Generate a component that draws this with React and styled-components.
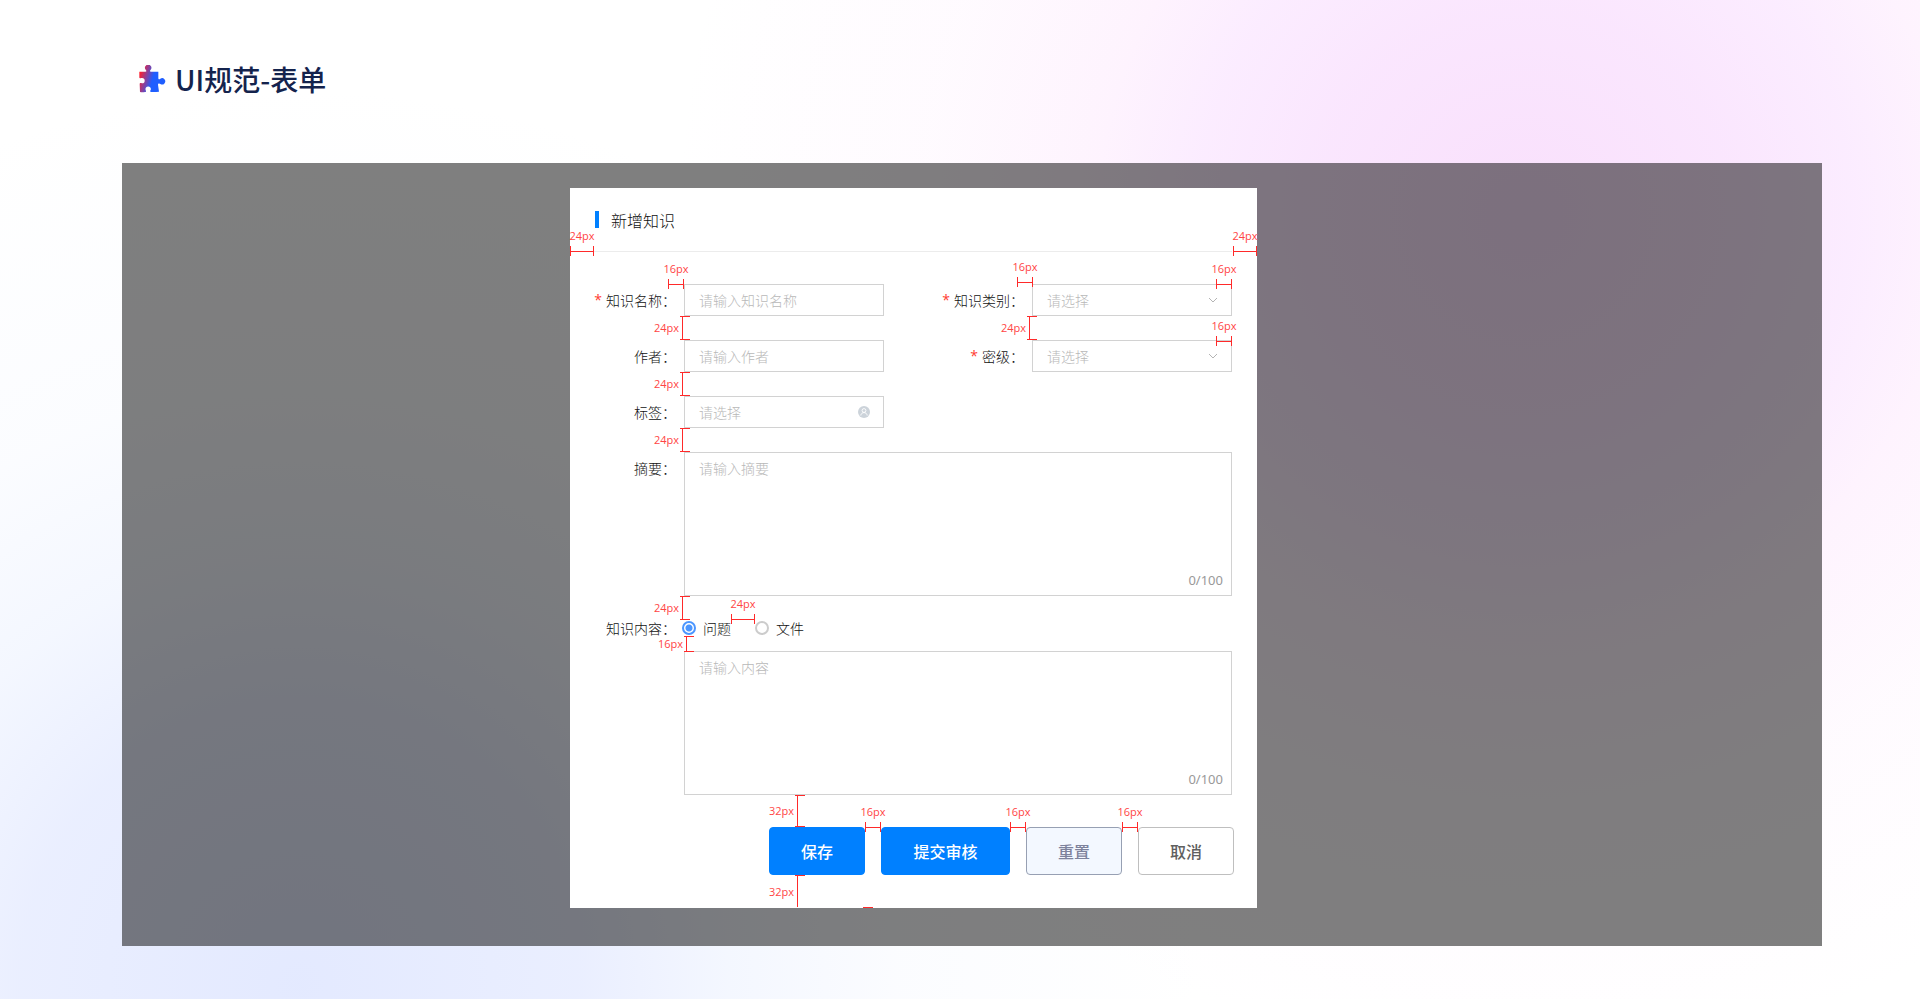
import React, { useState } from "react";
import styled, { createGlobalStyle } from "styled-components";

// spacing guides drawn over the dialog, measured from its top left corner
const hGuides = [
  { x: 0, y: 63, size: 24, label: "24px" },
  { x: 663, y: 63, size: 24, label: "24px" },
  { x: 98, y: 96, size: 16, label: "16px" },
  { x: 447, y: 94, size: 16, label: "16px" },
  { x: 646, y: 96, size: 16, label: "16px" },
  { x: 646, y: 153, size: 16, label: "16px" },
  { x: 161, y: 431, size: 24, label: "24px" },
  { x: 295, y: 639, size: 16, label: "16px" },
  { x: 440, y: 639, size: 16, label: "16px" },
  { x: 552, y: 639, size: 16, label: "16px" },
];

const vGuides = [
  { x: 112, y: 128, size: 24, label: "24px" },
  { x: 459, y: 128, size: 24, label: "24px" },
  { x: 112, y: 184, size: 24, label: "24px" },
  { x: 112, y: 240, size: 24, label: "24px" },
  { x: 112, y: 408, size: 24, label: "24px" },
  { x: 116, y: 448, size: 16, label: "16px" },
  { x: 227, y: 607, size: 32, label: "32px" },
  { x: 227, y: 687, size: 32, label: "32px", open: true },
];

const PuzzleIcon = () => (
  <svg width="27" height="28" viewBox="0 0 81 84" aria-hidden="true">
    <defs>
      <linearGradient id="puzzle" x1="0" y1="0.35" x2="0.8" y2="0.6">
        <stop offset="0" stopColor="#ff1f2d" />
        <stop offset="0.65" stopColor="#1f5eff" />
      </linearGradient>
    </defs>
    <path
      fill="url(#puzzle)"
      d="M1 20H19C23 20 23 17 20 14A9.500 9.500 0 1 1 35 14C32 17 32 20 36 20H58V39C58 44 61 44 64 41A9.500 9.500 0 1 1 64 57C61 54 57 55 57 59L60 80Q48 82 36 81C33 80 33 78 35 75A8 8 0 1 0 20 75C22 79 21 81 18 81Q10 83 3 81L2 56C4 53 6 55 9 55A8 8 0 1 0 9 39C6 39 4 41 1 38Z"
    />
  </svg>
);

const Chevron = () => (
  <svg width="10" height="6" viewBox="0 0 10 6" aria-hidden="true">
    <path d="M1 1L5 5L9 1" fill="none" stroke="#b4b4b4" />
  </svg>
);

const UserBadge = () => (
  <svg width="12" height="12" viewBox="0 0 12 12" aria-hidden="true">
    <circle cx="6" cy="6" r="6" fill="#ccd3da" />
    <circle cx="6" cy="4.500" r="1.900" fill="none" stroke="#fff" strokeWidth="0.900" />
    <path d="M2.800 9.500C3.200 5.600 8.800 5.600 9.200 9.500" fill="none" stroke="#fff" strokeWidth="0.900" />
  </svg>
);

const FormLabel = ({ htmlFor, required, children }) => (
  <Label htmlFor={htmlFor}>
    {required && <Star>*</Star>}
    {children}：
  </Label>
);

const SelectField = ({ id, label }) => (
  <Field>
    <FormLabel htmlFor={id} required>
      {label}
    </FormLabel>
    <Control>
      <Select id={id} defaultValue="">
        <option value="">请选择</option>
      </Select>
      <Suffix>
        <Chevron />
      </Suffix>
    </Control>
  </Field>
);

const App = () => {
  const [summary, setSummary] = useState("");
  const [content, setContent] = useState("");
  const [type, setType] = useState("question");

  return (
    <>
      <GlobalStyle />
      <Page>
        <PageHeader>
          <PuzzleIcon />
          <PageTitle>UI规范-表单</PageTitle>
        </PageHeader>
        <Mask>
          <Dialog role="dialog" aria-labelledby="dialog-title">
            <DialogHeader>
              <DialogTitle id="dialog-title">新增知识</DialogTitle>
            </DialogHeader>
            <form onSubmit={(ev) => ev.preventDefault()}>
              <Body>
                <Row>
                  <Field>
                    <FormLabel htmlFor="name" required>
                      知识名称
                    </FormLabel>
                    <Control>
                      <Input id="name" placeholder="请输入知识名称" />
                    </Control>
                  </Field>
                  <SelectField id="category" label="知识类别" />
                </Row>
                <Row>
                  <Field>
                    <FormLabel htmlFor="author">作者</FormLabel>
                    <Control>
                      <Input id="author" placeholder="请输入作者" />
                    </Control>
                  </Field>
                  <SelectField id="level" label="密级" />
                </Row>
                <Row>
                  <Field>
                    <FormLabel htmlFor="tag">标签</FormLabel>
                    <Control>
                      <Input id="tag" placeholder="请选择" />
                      <Suffix>
                        <UserBadge />
                      </Suffix>
                    </Control>
                  </Field>
                </Row>
                <Field>
                  <FormLabel htmlFor="summary">摘要</FormLabel>
                  <Control $grow>
                    <TextArea
                      id="summary"
                      placeholder="请输入摘要"
                      maxLength={100}
                      value={summary}
                      onChange={(ev) => setSummary(ev.target.value)}
                    />
                    <Counter>{summary.length}/100</Counter>
                  </Control>
                </Field>
                <ContentGroup>
                  <Field $tight>
                    <FormLabel htmlFor="content">知识内容</FormLabel>
                    <RadioGroup>
                      <RadioLabel>
                        <Radio
                          name="type"
                          checked={type === "question"}
                          onChange={() => setType("question")}
                        />
                        问题
                      </RadioLabel>
                      <RadioLabel>
                        <Radio
                          name="type"
                          checked={type === "file"}
                          onChange={() => setType("file")}
                        />
                        文件
                      </RadioLabel>
                    </RadioGroup>
                  </Field>
                  <Indent>
                    <Control $grow>
                      <TextArea
                        id="content"
                        placeholder="请输入内容"
                        maxLength={100}
                        value={content}
                        onChange={(ev) => setContent(ev.target.value)}
                      />
                      <Counter>{content.length}/100</Counter>
                    </Control>
                  </Indent>
                </ContentGroup>
              </Body>
              <Footer>
                <PrimaryButton type="submit">保存</PrimaryButton>
                <PrimaryButton type="button" $wide>
                  提交审核
                </PrimaryButton>
                <ResetButton type="button">重置</ResetButton>
                <Button type="button">取消</Button>
              </Footer>
            </form>
            {hGuides.map((g) => (
              <HGuide key={`${g.x}-${g.y}`} $x={g.x} $y={g.y} $size={g.size}>
                <span>{g.label}</span>
              </HGuide>
            ))}
            {vGuides.map((g) => (
              <VGuide
                key={`${g.x}-${g.y}`}
                $x={g.x}
                $y={g.y}
                $size={g.size}
                $open={g.open}
              >
                <span>{g.label}</span>
              </VGuide>
            ))}
            <EndTick />
          </Dialog>
        </Mask>
      </Page>
    </>
  );
};

const GlobalStyle = createGlobalStyle`
  * {
    box-sizing: border-box;
  }
  body {
    margin: 0;
    font-family: "Noto Sans CJK SC", sans-serif;
    font-size: 14px;
    color: #111;
  }
  button, input, select, textarea {
    font-family: inherit;
  }
`;

const Page = styled.main`
  min-height: 100vh;
  padding: 59px 98px 53px 122px;
  background: radial-gradient(
      circle at 1525px 215px,
      rgba(243, 193, 249, 0.5) 0,
      rgba(243, 193, 252, 0.4) 210px,
      rgba(243, 193, 255, 0.3) 330px,
      rgba(250, 193, 250, 0.19) 430px,
      rgba(250, 193, 250, 0.07) 600px,
      rgba(250, 193, 250, 0) 850px
    ),
    radial-gradient(
      circle at 300px 985px,
      rgba(200, 212, 255, 0.5) 0,
      rgba(200, 212, 255, 0.38) 280px,
      rgba(200, 216, 255, 0.2) 430px,
      rgba(200, 216, 255, 0.07) 600px,
      rgba(200, 216, 255, 0) 900px
    ),
    #fff;
`;

const PageHeader = styled.header`
  display: flex;
  align-items: center;
  gap: 9px;
  height: 40px;
  margin: 0 0 64px 17px;
`;

const PageTitle = styled.h1`
  margin: 0;
  font-size: 28px;
  line-height: 40px;
  font-weight: 500;
  color: #14234d;
`;

const Mask = styled.div`
  display: grid;
  grid-template-columns: 448fr 687px 565fr;
  padding: 25px 0 38px;
  background: rgba(0, 0, 0, 0.5);
`;

const Dialog = styled.section`
  position: relative;
  grid-column: 2;
  background: #fff;
`;

const DialogHeader = styled.div`
  display: flex;
  align-items: center;
  height: 64px;
  margin: 0 25px 0 24px;
  border-bottom: 1px solid #ececec;
`;

const DialogTitle = styled.h2`
  display: flex;
  align-items: center;
  gap: 12px;
  margin: 0;
  font-size: 16px;
  line-height: 24px;
  font-weight: 300;

  &::before {
    content: "";
    width: 4px;
    height: 17px;
    margin-left: 1px;
    background: #0080ff;
  }
`;

const Body = styled.div`
  display: flex;
  flex-direction: column;
  gap: 24px;
  padding: 32px 25px 0 24px;
`;

const Row = styled.div`
  display: flex;
  justify-content: space-between;
`;

const Field = styled.div`
  display: flex;
  gap: ${(props) => (props.$tight ? 6 : 8)}px;
  line-height: ${(props) => (props.$tight ? 16 : 32)}px;
`;

const Label = styled.label`
  flex: 0 0 82px;
  display: flex;
  justify-content: flex-end;
  white-space: nowrap;
  font-weight: 300;
`;

const Star = styled.span`
  margin-right: 4px;
  font-family: "Open Sans", sans-serif;
  font-weight: 400;
  color: #ff3b30;
`;

const Control = styled.div`
  position: relative;
  display: flex;
  width: ${(props) => (props.$grow ? "auto" : "200px")};
  flex: ${(props) => (props.$grow ? "1" : "none")};
`;

const Input = styled.input`
  width: 100%;
  height: 32px;
  padding: 0 14px;
  border: 1px solid #d2d2d2;
  border-radius: 0;
  outline: none;
  background: #fff;
  font-size: 14px;
  font-weight: 300;
  color: #111;

  &::placeholder {
    color: #b8b8b8;
    opacity: 1;
  }
`;

const Select = styled(Input).attrs({ as: "select" })`
  appearance: none;
  color: #b8b8b8;
`;

const TextArea = styled(Input).attrs({ as: "textarea" })`
  height: 144px;
  padding: 4px 14px;
  line-height: 22px;
  resize: none;
`;

const Suffix = styled.span`
  position: absolute;
  top: 0;
  right: 14px;
  display: flex;
  align-items: center;
  height: 32px;
  pointer-events: none;
`;

const Counter = styled.span`
  position: absolute;
  right: 9px;
  bottom: 8px;
  font-family: "Noto Sans", sans-serif;
  font-size: 13px;
  line-height: 16px;
  font-weight: 400;
  color: #999;
`;

const ContentGroup = styled.div`
  display: flex;
  flex-direction: column;
  gap: 15px;
`;

const Indent = styled.div`
  display: flex;
  padding-left: 90px;
`;

const RadioGroup = styled.div`
  display: flex;
  gap: 24px;
`;

const RadioLabel = styled.label`
  display: flex;
  align-items: center;
  gap: 7px;
  font-weight: 300;
`;

const Radio = styled.input.attrs({ type: "radio" })`
  appearance: none;
  width: 14px;
  height: 14px;
  margin: 0;
  border: 2px solid #ccc;
  border-radius: 50%;

  &:checked {
    border-color: #4b96ff;
    background: radial-gradient(circle, #4b96ff 3px, #fff 4px);
  }
`;

const Footer = styled.div`
  display: flex;
  justify-content: flex-end;
  gap: 16px;
  padding: 32px 23px 33px;
`;

const Button = styled.button`
  width: ${(props) => (props.$wide ? 129 : 96)}px;
  height: 48px;
  padding: 0;
  border: 1px solid #bfbfbf;
  border-radius: 4px;
  background: #fff;
  font-size: 16px;
  font-weight: 500;
  color: #606060;
  cursor: pointer;
`;

const PrimaryButton = styled(Button)`
  border-color: #0080ff;
  background: #0080ff;
  color: #fff;
`;

const ResetButton = styled(Button)`
  border-color: #97a0b3;
  background: #f3f8ff;
  color: #7d829c;
`;

const Guide = styled.div`
  position: absolute;
  left: ${(props) => props.$x}px;
  top: ${(props) => props.$y}px;
  pointer-events: none;

  span {
    position: absolute;
    font-family: "Open Sans", sans-serif;
    font-size: 11px;
    line-height: 12px;
    color: #ff4545;
  }
`;

const HGuide = styled(Guide)`
  width: ${(props) => props.$size}px;
  height: 10px;
  margin-top: -5px;
  border: solid #ff2a2a;
  border-width: 0 1px;
  background: linear-gradient(#ff2a2a, #ff2a2a) 0 5px / 100% 1px no-repeat;

  span {
    left: 50%;
    bottom: 14px;
    transform: translateX(-50%);
  }
`;

const VGuide = styled(Guide)`
  width: 10px;
  height: ${(props) => props.$size}px;
  margin-left: -2px;
  border: solid #ff2a2a;
  border-width: ${(props) => (props.$open ? "1px 0 0" : "1px 0")};
  background: linear-gradient(#ff2a2a, #ff2a2a) 2px 0 / 1px 100% no-repeat;

  span {
    right: 11px;
    top: 50%;
    transform: translateY(-50%);
  }
`;

const EndTick = styled.div`
  position: absolute;
  left: 293px;
  bottom: 0;
  width: 10px;
  height: 1px;
  background: #ff2a2a;
`;

export default App;
